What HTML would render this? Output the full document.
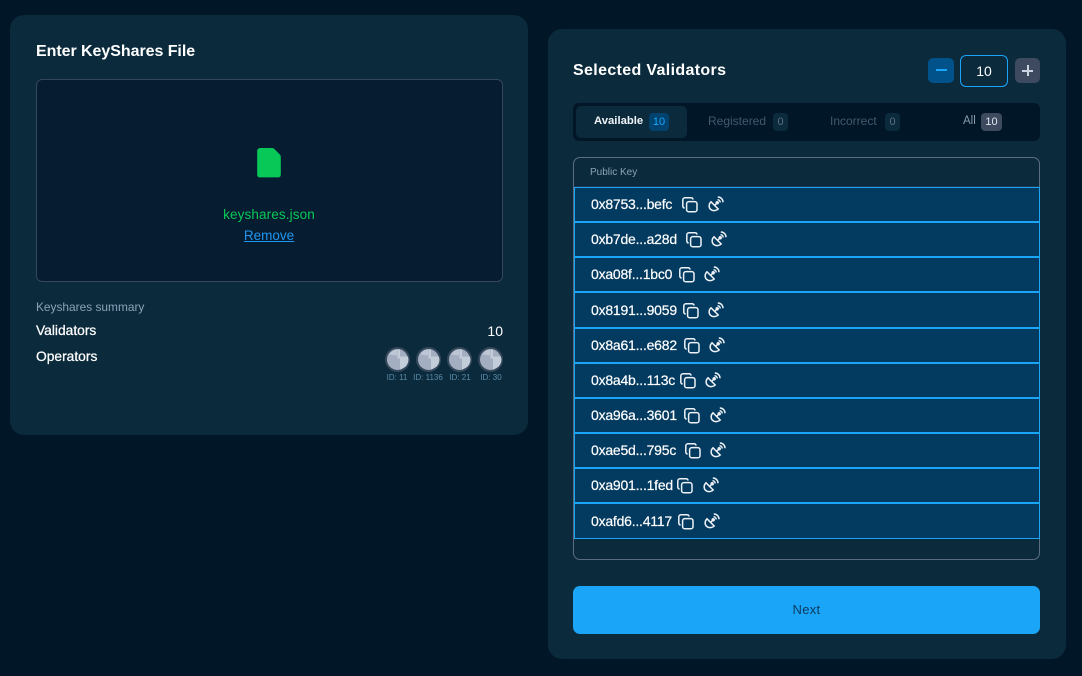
<!DOCTYPE html>
<html><head><meta charset="utf-8"><style>
html,body{margin:0;padding:0}
body{width:1082px;height:676px;background:#011627;overflow:hidden;position:relative;font-family:"Liberation Sans",sans-serif;color:#fff}
div,span,a,svg{position:absolute;box-sizing:border-box;white-space:nowrap}
.t{line-height:16px}
.b{font-weight:bold}
.row{left:574px;width:466px;height:35px;background:#033a5f;border:1px solid #1ba5f8}
.pk{left:591px;font-size:14px;line-height:16px;color:#fff;letter-spacing:-.22px;-webkit-text-stroke:.2px #fff}
.badge{height:18px;border-radius:4px;font-size:11px;line-height:18px;text-align:center;top:112px}
.tab{top:112px;font-size:12px;line-height:18px;color:#47586f}
.av{width:25px;height:25px;top:347px}
.id{top:373px;font-size:8px;line-height:10px;color:#5a8cab;text-align:center;width:36px}
</style></head><body>
<svg width="0" height="0" style="left:0;top:0"><defs>
<g id="cp" fill="none" stroke="#eef2f7" stroke-width="1.5"><rect x="4.600" y="4.600" width="10.400" height="10.200" rx="2.200"/><path d="M2.600 11.200C1.400 10.800.8 10 .8 9V3C.8 1.700 1.700.8 3 .8h6c1 0 1.800.6 2.200 1.700"/></g>
<g id="st" fill="none" stroke="#eef2f7" stroke-width="1.500"><path d="M3 5.800C.6 8 .6 11.600 2.600 13.300 4.600 15.200 8 15 10.200 13Z"/><path d="M6.500 9.500 9 7"/><circle cx="9.200" cy="6.800" r="1" fill="#eef2f7"/><path d="M9.500 3.800C11 3.800 12.200 5 12.200 6.500"/><path d="M9.800 1C12.800 1 15 3.300 15 6.200"/></g>
<g id="op"><circle cx="12.500" cy="12.500" r="11.500" fill="#a3aec0" stroke="#34475b" stroke-width="2"/><path d="M12.500 2.500 15 2.200V9.500H23A10.600 10.600 0 0 1 20.500 19.800L15 22.800V11.500H12.500Z" fill="#c3ccd9"/><path d="M4 7.500C6 4.500 9 2.500 12 2.200V8.500Z" fill="#bcc6d4"/></g>
</defs></svg>

<div style="left:10px;top:15px;width:518px;height:420px;background:#0b2a3c;border-radius:14px"></div>
<div class="t b" style="left:36px;top:44px;font-size:16px;letter-spacing:-.05px">Enter KeyShares File</div>
<div style="left:36px;top:79px;width:467px;height:203px;background:#061d31;border:1px solid #34475b;border-radius:6px"></div>
<svg style="left:257px;top:148px" width="24" height="30"><path d="M3.500 0H15C16 0 16.800.4 17.500 1.100L22.700 6.400C23.400 7.100 23.800 8 23.800 9V26.500C23.800 28.300 22.800 29.400 21 29.400H3C1.200 29.400.2 28.300.2 26.500V3.200C.2 1.200 1.500 0 3.500 0Z" fill="#08c858"/></svg>
<div class="t" style="left:169px;width:200px;text-align:center;top:207px;font-size:13.500px;color:#08c858;letter-spacing:.12px">keyshares.json</div>
<a class="t" style="left:169px;width:200px;text-align:center;top:228px;font-size:13.500px;color:#1f95f0;text-decoration:none"><span style="position:static;text-decoration:underline">Remove</span></a>
<div class="t" style="left:36px;top:299px;font-size:11.900px;color:#8ba2b8">Keyshares summary</div>
<div class="t" style="left:36px;top:323px;font-size:13.800px;-webkit-text-stroke:.25px #fff">Validators</div>
<div class="t" style="right:579px;top:323px;font-size:14px">10</div>
<div class="t" style="left:36px;top:349px;font-size:13.800px;-webkit-text-stroke:.25px #fff">Operators</div>
<svg class="av" style="left:385px"><use href="#op"/></svg>
<svg class="av" style="left:416px"><use href="#op"/></svg>
<svg class="av" style="left:447px"><use href="#op"/></svg>
<svg class="av" style="left:478px"><use href="#op"/></svg>
<div class="id" style="left:379px">ID: 11</div>
<div class="id" style="left:410px">ID: 1136</div>
<div class="id" style="left:442px">ID: 21</div>
<div class="id" style="left:473px">ID: 30</div>

<div style="left:548px;top:29px;width:518px;height:630px;background:#0b2a3c;border-radius:14px"></div>
<div class="t b" style="left:573px;top:63px;font-size:16px;letter-spacing:.35px">Selected Validators</div>
<div style="left:928px;top:58px;width:26px;height:25px;background:#01528a;border-radius:5px"></div>
<div style="left:936px;top:69px;width:11px;height:2px;background:#1ba5f8"></div>
<div style="left:960px;top:55px;width:48px;height:32px;border:1px solid #1ba5f8;border-radius:6px;text-align:center;font-size:14px;line-height:30px;color:#fff">10</div>
<div style="left:1015px;top:58px;width:25px;height:25px;background:#3d4a60;border-radius:5px"></div>
<div style="left:1022px;top:70px;width:11px;height:2px;background:#cbd5e1"></div>
<div style="left:1026.500px;top:65px;width:2px;height:11px;background:#cbd5e1"></div>

<div style="left:573px;top:103px;width:467px;height:38px;background:#011627;border-radius:6px"></div>
<div style="left:576px;top:106px;width:111px;height:32px;background:#0b2a3c;border-radius:5px"></div>
<div class="tab b" style="left:594px;color:#f1f5f9;font-size:11.300px">Available</div>
<div class="badge" style="left:649px;top:113px;width:20px;background:#01426f;color:#1ba5f8">10</div>
<div class="tab" style="left:708px">Registered</div>
<div class="badge" style="left:773px;top:113px;width:15px;background:#0b2a3c;color:#5b6d84">0</div>
<div class="tab" style="left:830px">Incorrect</div>
<div class="badge" style="left:885px;top:113px;width:15px;background:#0b2a3c;color:#5b6d84">0</div>
<div class="tab" style="left:963px;color:#8a9ab0;font-size:11.500px">All</div>
<div class="badge" style="left:981px;top:113px;width:21px;background:#3d4a60;color:#e2e8f0">10</div>

<div style="left:573px;top:157px;width:467px;height:403px;border:1px solid #5b6d80;border-radius:7px"></div>
<div style="left:574px;top:158px;width:465px;height:29px;border-bottom:1px solid #1f3a4f"></div>
<div class="t" style="left:590px;top:165px;font-size:10px;color:#8ba2b8">Public Key</div>

<div class="row" style="top:187px"></div><div class="row" style="top:222px"></div><div class="row" style="top:257px"></div><div class="row" style="top:292px;height:36px"></div><div class="row" style="top:328px"></div><div class="row" style="top:363px"></div><div class="row" style="top:398px"></div><div class="row" style="top:433px"></div><div class="row" style="top:468px"></div><div class="row" style="top:503px;height:36px"></div>

<div class="pk" style="top:196px">0x8753...befc</div><svg style="left:682px;top:197px" width="16" height="16"><use href="#cp"/></svg><svg style="left:708px;top:196px" width="16" height="16"><use href="#st"/></svg>
<div class="pk" style="top:231px">0xb7de...a28d</div><svg style="left:686px;top:232px" width="16" height="16"><use href="#cp"/></svg><svg style="left:711px;top:231px" width="16" height="16"><use href="#st"/></svg>
<div class="pk" style="top:266px">0xa08f...1bc0</div><svg style="left:679px;top:267px" width="16" height="16"><use href="#cp"/></svg><svg style="left:704px;top:266px" width="16" height="16"><use href="#st"/></svg>
<div class="pk" style="top:302px">0x8191...9059</div><svg style="left:683px;top:303px" width="16" height="16"><use href="#cp"/></svg><svg style="left:708px;top:302px" width="16" height="16"><use href="#st"/></svg>
<div class="pk" style="top:337px">0x8a61...e682</div><svg style="left:684px;top:338px" width="16" height="16"><use href="#cp"/></svg><svg style="left:709px;top:337px" width="16" height="16"><use href="#st"/></svg>
<div class="pk" style="top:372px">0x8a4b...113c</div><svg style="left:680px;top:373px" width="16" height="16"><use href="#cp"/></svg><svg style="left:705px;top:372px" width="16" height="16"><use href="#st"/></svg>
<div class="pk" style="top:407px">0xa96a...3601</div><svg style="left:684px;top:408px" width="16" height="16"><use href="#cp"/></svg><svg style="left:710px;top:407px" width="16" height="16"><use href="#st"/></svg>
<div class="pk" style="top:442px">0xae5d...795c</div><svg style="left:685px;top:443px" width="16" height="16"><use href="#cp"/></svg><svg style="left:710px;top:442px" width="16" height="16"><use href="#st"/></svg>
<div class="pk" style="top:477px">0xa901...1fed</div><svg style="left:677px;top:478px" width="16" height="16"><use href="#cp"/></svg><svg style="left:703px;top:477px" width="16" height="16"><use href="#st"/></svg>
<div class="pk" style="top:513px">0xafd6...4117</div><svg style="left:678px;top:514px" width="16" height="16"><use href="#cp"/></svg><svg style="left:704px;top:513px" width="16" height="16"><use href="#st"/></svg>

<div style="left:573px;top:586px;width:467px;height:48px;background:#1ba5f8;border-radius:7px;text-align:center;line-height:47px;font-size:13px;color:#0b3a5e;letter-spacing:.3px">Next</div>
</body></html>
